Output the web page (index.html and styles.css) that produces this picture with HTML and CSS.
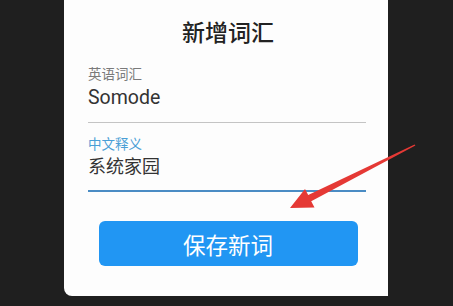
FILE: index.html
```html
<!DOCTYPE html>
<html>

<head>
	<meta charset="UTF-8">
	<link rel="stylesheet" href="styles.css">
</head>

<body>
	<!-- 新增词汇弹窗 -->
	<div class="dialog-card">
		<div class="dialog-title">新增词汇</div>

		<div class="field">
			<div class="field-label">英语词汇</div>
			<div class="field-value latin">Somode</div>
		</div>

		<div class="field field-active">
			<div class="field-label">中文释义</div>
			<div class="field-value">系统家园</div>
		</div>

		<button class="save-button">保存新词</button>
	</div>

	<!-- 标注箭头 -->
	<svg class="mark-arrow" width="453" height="306" viewBox="0 0 453 306">
		<polygon points="290,208 305,189 308.2,195 414.6,144.4 415.4,145.6 311.2,201.2 314.5,207.5" fill="#e53935" />
	</svg>
</body>

</html>
```

FILE: styles.css
```css
html,
body {
	overflow: hidden;
	width: 100%;
	height: 100%;
	margin: 0;
	padding: 0;
}

body {
	background: #1f1f1f;
	font-family: Roboto, "Noto Sans CJK SC", sans-serif;
	position: relative;
}

/* 白色卡片 */
.dialog-card {
	margin-left: 64px;
	width: 324px;
	height: 296px;
	box-sizing: border-box;
	background: #fdfdfd;
	border-bottom-left-radius: 8px;
	padding: 15px 22px 0 24px;
	display: flex;
	flex-direction: column;
}

.dialog-title {
	font-family: "Noto Sans CJK SC", sans-serif;
	font-size: 23px;
	font-weight: 500;
	line-height: 32px;
	color: #222;
	text-align: center;
	padding-left: 2px;
	margin-bottom: 17px;
}

.field {
	border-bottom: 1.5px solid #c4c4c4;
	padding-bottom: 11px;
	margin-bottom: 11px;
}

.field-label {
	font-family: "Noto Sans CJK SC", sans-serif;
	font-size: 13.5px;
	line-height: 18px;
	color: #7a7a7a;
	margin-bottom: 3px;
}

.field-value {
	font-family: "Noto Sans CJK SC", sans-serif;
	font-size: 18px;
	line-height: 26px;
	color: #333;
}

.field-value.latin {
	font-family: Roboto, sans-serif;
	font-size: 19.5px;
}

.field-active {
	border-bottom: 2px solid #4a8cc4;
	padding-bottom: 12px;
	margin-bottom: 29px;
}

.field-active .field-label {
	color: #4a9fd6;
	margin-bottom: 0;
}

/* 保存按钮 */
.save-button {
	align-self: center;
	width: 259px;
	height: 45px;
	margin-left: 2px;
	border: none;
	border-radius: 6px;
	background: #2196f3;
	color: #fff;
	font-family: "Noto Sans CJK SC", sans-serif;
	font-size: 22.5px;
	cursor: pointer;
}

.mark-arrow {
	position: absolute;
	top: 0;
	left: 0;
	pointer-events: none;
}
```
